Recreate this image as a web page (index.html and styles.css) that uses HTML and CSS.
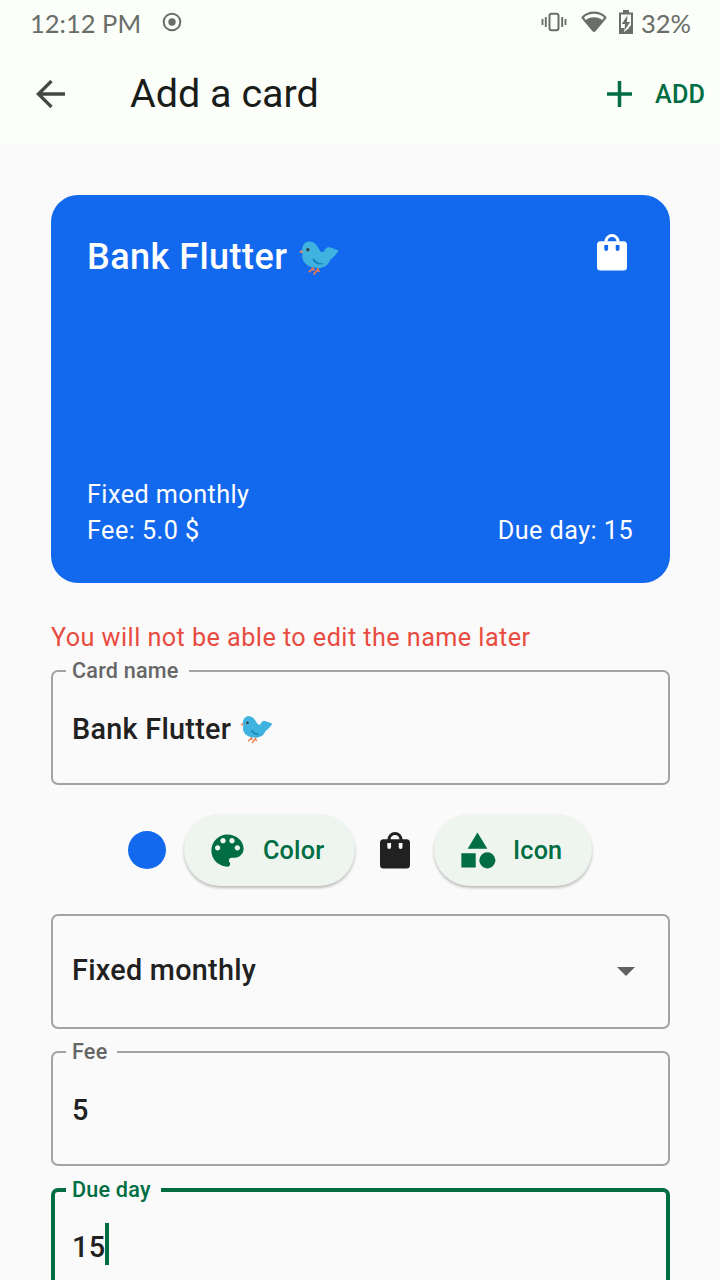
FILE: index.html
```html
<!DOCTYPE html>
<html lang="en">
<head>
<meta charset="utf-8">
<title>Add a card</title>
<link rel="stylesheet" href="styles.css">
</head>
<body>
<svg class="defs" width="0" height="0" aria-hidden="true">
  <symbol id="bird" viewBox="0 0 118 102">
    <path d="M41 72l-2 11-9 7M57 73l-2 11-11 13M39 83l6 1M55 84l4 5" fill="none" stroke="#ed7a4b" stroke-width="5" stroke-linecap="round"/>
    <path d="M10 25L0 31l12 6z" fill="#f58b55"/>
    <path d="M9 23C12 8 20 1 31 1c15 0 22 12 29 24 4 7 8 9 13 5 5-8 9-14 17-12 11 3 18 7 27 10-8 12-16 20-26 28-4 14-17 23-34 23C31 79 13 68 10 49c-1-9 3-13-1-26z" fill="#3fb3df"/>
    <path d="M39 53c6 13 19 20 36 13-13-1-26-5-30-16" fill="#1684bd"/>
    <path d="M55 35c-8 5-11 12-8 18 4 7 15 11 27 10" fill="#3fb3df"/>
    <circle cx="26" cy="25" r="5" fill="#34434c"/>
  </symbol>
  <symbol id="bag" viewBox="0 0 30 37">
    <path d="M9 9V7.500a6 6 0 0 1 12 0V9" fill="none" stroke="currentColor" stroke-width="3"/>
    <path fill-rule="evenodd" fill="currentColor" d="M3.500 7.300h23A3.500 3.500 0 0 1 30 10.800v22.200a3.500 3.500 0 0 1-3.500 3.500h-23A3.500 3.500 0 0 1 0 33V10.800a3.500 3.500 0 0 1 3.500-3.500zM7.300 11v4a1.900 1.900 0 0 0 3.800 0v-4zM18.700 11v4a1.900 1.900 0 0 0 3.800 0v-4z"/>
  </symbol>
</svg>

<header class="top">
  <div class="status">
    <span class="clock">12:12 PM</span>
    <svg class="record" width="20" height="20" viewBox="0 0 20 20"><circle cx="10" cy="10" r="8.300" fill="none" stroke="currentColor" stroke-width="2"/><circle cx="10" cy="10" r="3.700" fill="currentColor"/></svg>
    <svg class="vibrate" width="26" height="20" viewBox="0 0 26 20"><rect x="8.500" y="1.800" width="9" height="16.400" rx="2" fill="none" stroke="currentColor" stroke-width="2"/><path d="M1.500 7v6M4.800 5v10M21.200 5v10M24.500 7v6" stroke="currentColor" stroke-width="1.900"/></svg>
    <svg class="wifi" width="26" height="22" viewBox="0 0 26 22"><path d="M13 .500C8 .500 3.500 2.500 1 5.500c-.700.800-.600 1.500 0 2.300l10.500 12.500q1.500 1.600 3 0L25 7.800c.600-.800.700-1.500 0-2.300C22.500 2.500 18 .500 13 .500z" fill="currentColor"/><path d="M3 6.500C5.500 4 9 2.800 13 2.800s7.500 1.200 10 3.700L21.300 9C18.500 7 16 6.300 13 6.300S7.500 7 4.700 9z" fill="#fbfef9"/></svg>
    <svg class="battery" width="14" height="24" viewBox="0 0 14 24"><path d="M4 0h6v2.500h4V24H0V2.500h4z" fill="currentColor"/><path d="M2 4.500h10V15L9 19l-4 3 .500-4H2z" fill="#fbfef9"/><path d="M8.300 5.500L2.800 14H6l-.500 6.500L11.200 12H8z" fill="currentColor"/></svg>
    <span class="percent">32%</span>
  </div>
  <div class="bar">
    <svg class="back" width="30" height="28" viewBox="0 0 30 28"><path d="M29 14H2M15.500 1L2.400 14l13.100 13" fill="none" stroke="#414942" stroke-width="3.300"/></svg>
    <h1>Add a card</h1>
    <svg class="plus" width="25" height="26" viewBox="0 0 25 26"><path d="M12.500 0v26M0 13h25" stroke="currentColor" stroke-width="3.500"/></svg>
    <span class="add">ADD</span>
  </div>
</header>

<main>
  <section class="card">
    <div class="card-head">
      <h2>Bank Flutter</h2>
      <svg class="card-bird"><use href="#bird"/></svg>
      <svg class="card-bag"><use href="#bag"/></svg>
    </div>
    <div class="card-foot">
      <p>Fixed monthly<br>Fee: 5.0 $</p>
      <p>Due day: 15</p>
    </div>
  </section>

  <p class="warning">You will not be able to edit the name later</p>

  <fieldset class="field name-field">
    <legend>Card name</legend>
    <div class="value"><span class="name-text">Bank Flutter</span><svg class="field-bird"><use href="#bird"/></svg></div>
  </fieldset>

  <div class="pickers">
    <span class="swatch"></span>
    <div class="pill color-pill">
      <svg width="43" height="43" viewBox="0 0 24 24"><path fill="currentColor" d="M12 3c-4.970 0-9 4.030-9 9s4.030 9 9 9c.830 0 1.500-.670 1.500-1.500 0-.390-.150-.740-.390-1.010-.230-.260-.380-.610-.380-.990 0-.830.670-1.500 1.500-1.500H16c2.760 0 5-2.240 5-5 0-4.420-4.030-8-9-8zm-5.500 9c-.830 0-1.500-.670-1.500-1.500S5.670 9 6.500 9 8 9.670 8 10.500 7.330 12 6.500 12zm3-4C8.670 8 8 7.330 8 6.500S8.670 5 9.500 5s1.500.670 1.500 1.500S10.330 8 9.500 8zm5 0c-.830 0-1.500-.670-1.500-1.500S13.670 5 14.500 5s1.500.670 1.500 1.500S15.330 8 14.500 8zm3 4c-.830 0-1.500-.670-1.500-1.500S16.670 9 17.500 9s1.500.670 1.500 1.500-.670 1.500-1.500 1.500z"/></svg>
      <span>Color</span>
    </div>
    <svg class="dark-bag"><use href="#bag"/></svg>
    <div class="pill icon-pill">
      <svg width="43" height="43" viewBox="0 0 24 24"><path fill="currentColor" d="M12 2l-5.500 9h11zM3 13.500h8v8H3z"/><circle cx="17.500" cy="17.500" r="4.500" fill="currentColor"/></svg>
      <span>Icon</span>
    </div>
  </div>

  <div class="field select">
    <span>Fixed monthly</span>
    <svg width="18" height="9" viewBox="0 0 18 9"><path d="M0 0h18L9 9z" fill="#616161"/></svg>
  </div>

  <fieldset class="field fee-field">
    <legend>Fee</legend>
    <div class="value">5</div>
  </fieldset>

  <fieldset class="field due-field">
    <legend>Due day</legend>
    <div class="value">15<i class="caret"></i></div>
  </fieldset>
</main>
</body>
</html>
```
FILE: styles.css
```css
* { box-sizing: border-box; }
html, body { height: 1280px; overflow: hidden; }
body {
  margin: 0;
  width: 720px;
  background: #fafafa;
  color: #212121;
  font-family: Roboto, "Liberation Sans", sans-serif;
}
h1, h2, p { margin: 0; }
svg { display: block; flex: none; }
.defs { position: absolute; }

.top { height: 144px; background: #fbfef9; }
.status {
  display: flex;
  align-items: center;
  height: 44px;
  padding: 0 30px;
  color: #6a6d68;
  font: 25.5px/44px Lato, sans-serif;
}
.clock { width: 110px; padding-top: 1px; white-space: nowrap; }
.record { margin-left: 22px; }
.vibrate { margin-left: auto; }
.wifi { margin-left: 14px; }
.battery { margin-left: 12px; }
.percent { width: 49px; margin-left: 8px; padding-top: 1px; }
.bar { display: flex; align-items: center; height: 100px; padding: 0 15px 0 36px; }
h1 {
  margin-left: 64px;
  font-size: 39.5px;
  font-weight: 400;
  line-height: 52px;
  color: #191c19;
}
.plus { margin-left: auto; color: #006d43; }
.add {
  width: 50px;
  margin-left: 23px;
  font-size: 25.2px;
  font-weight: 500;
  line-height: 30px;
  padding-top: 1px;
  letter-spacing: .18px;
  color: #006d43;
}

main { padding: 51px 50px 0 51px; }
.card {
  display: flex;
  flex-direction: column;
  justify-content: space-between;
  height: 388px;
  padding: 36px 37px 34px 36px;
  border-radius: 27px;
  background: #1269ee;
  color: #fff;
}
.card-head { display: flex; }
h2 { font-size: 36px; font-weight: 500; line-height: 52px; letter-spacing: .45px; }
.card-bird { width: 40px; height: 35px; margin: 10px 0 0 12px; }
.card-bag { width: 30px; height: 37px; margin: 3px 6px 0 auto; }
.card-foot {
  display: flex;
  justify-content: space-between;
  align-items: flex-end;
  font-size: 25.2px;
  line-height: 36px;
  letter-spacing: .45px;
}

.warning {
  margin-top: 37px;
  font-size: 25.2px;
  line-height: 36px;
  letter-spacing: .45px;
  color: #e94b41;
}
.field {
  margin: 0;
  border: 2px solid #a3a3a3;
  border-radius: 7px;
  font-size: 28.8px;
  font-weight: 500;
  letter-spacing: .27px;
}
fieldset.field { height: 127px; padding: 0 13px; }
legend {
  height: 26px;
  padding: 0 10px 0 6px;
  font-size: 21.6px;
  line-height: 26px;
  letter-spacing: .2px;
  color: #666;
}
.value { display: flex; align-items: center; height: 89px; padding-left: 6px; }
.name-field { margin-top: 2px; }
.field-bird { width: 33px; height: 28px; margin: 2px 0 0 9px; }

.pickers { display: flex; align-items: center; height: 72px; margin-top: 29px; padding-left: 77px; }
.swatch { width: 38px; height: 38px; border-radius: 50%; background: #1269ee; }
.pill {
  display: flex;
  align-items: center;
  height: 72px;
  border-radius: 36px;
  background: #edf5ee;
  box-shadow: 0 2px 3px rgba(0, 0, 0, .25);
  color: #006d43;
  font-size: 25.2px;
  font-weight: 500;
  letter-spacing: .18px;
}
.pill svg { margin-left: 22px; }
.pill span { margin-left: 14px; }
.color-pill { width: 171px; margin-left: 18px; }
.dark-bag { width: 30px; height: 37px; margin-left: 25px; }
.icon-pill { width: 158px; margin-left: 24px; }

.select {
  display: flex;
  align-items: center;
  justify-content: space-between;
  height: 115px;
  margin-top: 28px;
  padding: 0 33px 4px 19px;
}
.select svg { margin-top: 4px; }
.fee-field { margin-top: 10px; }
.due-field { margin-top: 11px; border: 4px solid #006d43; }
fieldset.due-field { padding: 0 11px; }
.due-field legend { color: #006d43; }
.due-field .value { height: 87px; }
.caret { width: 4px; height: 42px; margin-bottom: 6px; background: #006d43; }
```
